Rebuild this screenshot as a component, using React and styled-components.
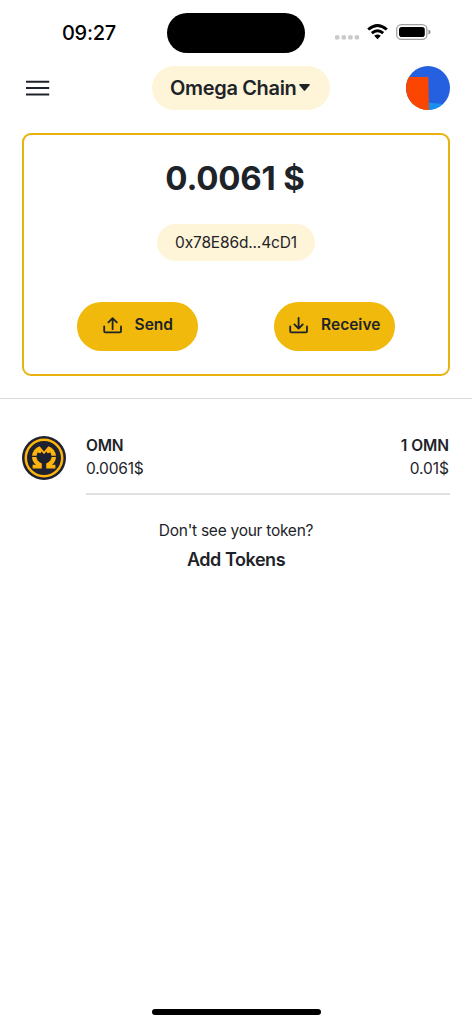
import React from 'react';
import styled, { createGlobalStyle } from 'styled-components';

const GlobalStyle = createGlobalStyle`
  * {
    box-sizing: border-box;
  }

  body {
    margin: 0;
    background-color: #ffffff;
    font-family: Inter, 'Liberation Sans', sans-serif;
    color: #1e2329;
  }

  button {
    border: none;
    padding: 0;
    font-family: inherit;
    color: inherit;
    background: none;
    cursor: pointer;
  }
`;

const Screen = styled.div`
  display: flex;
  flex-direction: column;
  width: 472px;
  height: 1024px;
  overflow: hidden;
`;

const StatusBar = styled.div`
  display: flex;
  align-items: flex-start;
  height: 66px;
  padding: 12.5px 41px 0 62px;
`;

const Time = styled.span`
  width: 105px;
  margin-top: 8px;
  font-size: 20px;
  font-weight: 500;
  line-height: 24px;
  letter-spacing: -0.3px;
  color: #000000;
`;

const Island = styled.div`
  width: 138px;
  height: 40.5px;
  border-radius: 21px;
  background-color: #000000;
`;

const StatusIcons = styled.svg`
  display: block;
  width: 98px;
  height: 20px;
  margin: 9.5px 0 0 auto;
`;

const Header = styled.header`
  display: flex;
  align-items: center;
  justify-content: space-between;
  height: 44px;
  padding: 0 22px 0 26px;
`;

const MenuButton = styled.button`
  display: flex;
  width: 44px;
  height: 44px;
  align-items: center;
`;

const ChainSelect = styled.button`
  display: flex;
  align-items: center;
  justify-content: center;
  gap: 3px;
  width: 178px;
  height: 44px;
  margin-left: 6.5px;
  padding-right: 2px;
  border-radius: 22px;
  background-color: #fef5d8;
  font-size: 20px;
  font-weight: 600;
  line-height: 24px;
  letter-spacing: -0.35px;
  white-space: nowrap;
`;

const Avatar = styled.svg`
  display: block;
  width: 44px;
  height: 44px;
`;

const Card = styled.section`
  display: flex;
  flex-direction: column;
  align-items: center;
  height: 243px;
  margin: 23px 22px 0;
  padding-top: 21px;
  border: 2px solid #e9b20f;
  border-radius: 9px;
`;

const Amount = styled.h1`
  margin: 0;
  padding-right: 2px;
  font-size: 33px;
  font-weight: 700;
  line-height: 44px;
  letter-spacing: -0.2px;
  white-space: nowrap;
`;

const Address = styled.div`
  display: flex;
  align-items: center;
  justify-content: center;
  width: 158px;
  height: 37px;
  margin-top: 24px;
  border-radius: 19px;
  background-color: #fef5d8;
  font-size: 15.5px;
  letter-spacing: -0.15px;
  white-space: nowrap;
`;

const Actions = styled.div`
  display: flex;
  gap: 76px;
  margin-top: 41px;
`;

const ActionButton = styled.button`
  display: flex;
  justify-content: center;
  gap: 12px;
  width: 121px;
  height: 49px;
  padding-top: 13px;
  border-radius: 25px;
  background-color: #f0b90b;
  font-size: 15.5px;
  font-weight: 600;
  line-height: 20px;
`;

const ActionIcon = styled.svg`
  display: block;
  width: 20px;
  height: 20px;
  margin: 1.5px 0 0 0.5px;
`;

const Divider = styled.div`
  height: 1px;
  margin-top: 22px;
  background-color: #d9dadb;
`;

const TokenRow = styled.div`
  display: flex;
  gap: 20px;
  margin: 37px 22px 0;
`;

const TokenLogo = styled.svg`
  display: block;
  flex: none;
  width: 44px;
  height: 44px;
`;

const TokenInfo = styled.div`
  display: flex;
  flex: 1;
  justify-content: space-between;
  height: 59px;
  border-bottom: 2px solid #e0e1e2;
`;

const TokenColumn = styled.div`
  display: flex;
  flex-direction: column;
  align-items: ${props => props.$align || 'flex-start'};
  margin-top: -2px;
  padding-right: 1px;
  font-size: 15.5px;
  line-height: 23px;
  letter-spacing: ${props => props.$spacing || '-0.2px'};
  white-space: nowrap;
`;

const TokenName = styled.span`
  font-weight: 600;
`;

const Footer = styled.div`
  display: flex;
  flex-direction: column;
  align-items: center;
  margin-top: 24px;
`;

const Hint = styled.span`
  font-size: 15.5px;
  line-height: 24px;
  letter-spacing: -0.26px;
  white-space: nowrap;
`;

const AddTokens = styled.button`
  margin-top: 5px;
  font-size: 18px;
  font-weight: 600;
  line-height: 24px;
  letter-spacing: -0.45px;
  white-space: nowrap;
`;

const HomeIndicator = styled.div`
  width: 169px;
  height: 6px;
  margin: auto auto 9px;
  border-radius: 3px;
  background-color: #000000;
`;

const tray = 'M1.2 9.4V14.2Q1.2 15.4 2.4 15.4H16.8Q18 15.4 18 14.2V9.4';

function Action({ label, arrow }) {
  return (
    <ActionButton>
      <ActionIcon viewBox="0 0 20 20" fill="none" stroke="#1e2329" strokeWidth="1.8" strokeLinecap="round" strokeLinejoin="round">
        <path d={tray} />
        <path d={arrow} />
      </ActionIcon>
      <span>{label}</span>
    </ActionButton>
  );
}

export default function App() {
  return (
    <Screen>
      <GlobalStyle />
      <StatusBar>
        <Time>09:27</Time>
        <Island />
        <StatusIcons viewBox="0 0 98 20">
          <g fill="#c9c9c9">
            <rect x="2" y="13.2" width="4.4" height="4.4" rx="1.4" />
            <rect x="8.6" y="13.2" width="4.4" height="4.4" rx="1.4" />
            <rect x="15.2" y="13.2" width="4.4" height="4.4" rx="1.4" />
            <rect x="21.8" y="13.2" width="4.4" height="4.4" rx="1.4" />
          </g>
          <g fill="none" stroke="#000000" strokeWidth="2.9">
            <path d="M35.2 7.5Q44.5 -0.7 53.8 7.5" />
            <path d="M38.8 11.2Q44.5 6.2 50.2 11.2" />
          </g>
          <path d="M41.2 13.8Q44.5 11.2 47.8 13.8L44.5 17.3Z" fill="#000000" />
          <rect x="63.7" y="2.7" width="30.2" height="14.6" rx="4.6" fill="none" stroke="#a0a0a0" strokeWidth="1.3" />
          <rect x="66" y="5" width="25.8" height="10" rx="2.8" fill="#000000" />
          <path d="M95.5 7.6Q97.6 8.3 97.6 10Q97.6 11.7 95.5 12.4Z" fill="#8c8c8c" />
        </StatusIcons>
      </StatusBar>

      <Header>
        <MenuButton aria-label="Menu">
          <svg width="24" height="16" viewBox="0 0 24 16" stroke="#1e2329" strokeWidth="2">
            <path d="M0 1.7H23.2M0 8.1H23.2M0 14.4H23.2" />
          </svg>
        </MenuButton>
        <ChainSelect>
          Omega Chain
          <svg width="11" height="8" viewBox="0 0 11 8" fill="#1e2329">
            <path d="M0.8 0H10.2Q11.2 0.3 10.5 1.2L6.2 6.6Q5.5 7.4 4.8 6.6L0.5 1.2Q-0.2 0.3 0.8 0Z" />
          </svg>
        </ChainSelect>
        <Avatar viewBox="0 0 44 44">
          <clipPath id="avatar">
            <circle cx="22" cy="22" r="22" />
          </clipPath>
          <g clipPath="url(#avatar)">
            <rect width="44" height="44" fill="#2560e0" />
            <path d="M22 36.5L44 38.8V44H22Z" fill="#1890f2" />
            <path d="M0 33L24 44H0Z" fill="#fa8a05" />
            <path d="M0 11H22.3L23 44H14L0 34.5Z" fill="#fa4600" />
          </g>
        </Avatar>
      </Header>

      <Card>
        <Amount>0.0061 $</Amount>
        <Address>0x78E86d...4cD1</Address>
        <Actions>
          <Action label="Send" arrow="M9.6 12.2V1.4M5.4 5.3L9.6 1.2L13.8 5.3" />
          <Action label="Receive" arrow="M9.6 0.9V11.4M5.4 7.4L9.6 11.5L13.8 7.4" />
        </Actions>
      </Card>

      <Divider />

      <TokenRow>
        <TokenLogo viewBox="0 0 44 44">
          <circle cx="22" cy="22" r="22" fill="#1e2130" />
          <circle cx="22" cy="22" r="18.2" fill="none" stroke="#fdb50d" strokeWidth="2.5" />
          <g fill="#fdb50d">
            <path d="M17.6 10.2L22 15.6L26.4 10.2Q33 12.6 34 19.8H29.4L28.6 16.6L25.6 17.2L24.4 15.6L22 18.2L19.6 15.6L18.4 17.2L15.4 16.6L14.6 19.8H10Q11 12.6 17.6 10.2Z" />
            <path d="M10 21H14.4Q14.8 25 19.8 27.6V32.4H10.6V28.8H14Q10.2 26 10 21Z" />
            <path d="M34 21H29.6Q29.2 25 24.2 27.6V32.4H33.4V28.8H30Q33.8 26 34 21Z" />
          </g>
        </TokenLogo>
        <TokenInfo>
          <TokenColumn>
            <TokenName>OMN</TokenName>
            <span>0.0061$</span>
          </TokenColumn>
          <TokenColumn $align="flex-end" $spacing="-0.05px">
            <TokenName>1 OMN</TokenName>
            <span>0.01$</span>
          </TokenColumn>
        </TokenInfo>
      </TokenRow>

      <Footer>
        <Hint>Don't see your token?</Hint>
        <AddTokens>Add Tokens</AddTokens>
      </Footer>

      <HomeIndicator />
    </Screen>
  );
}
